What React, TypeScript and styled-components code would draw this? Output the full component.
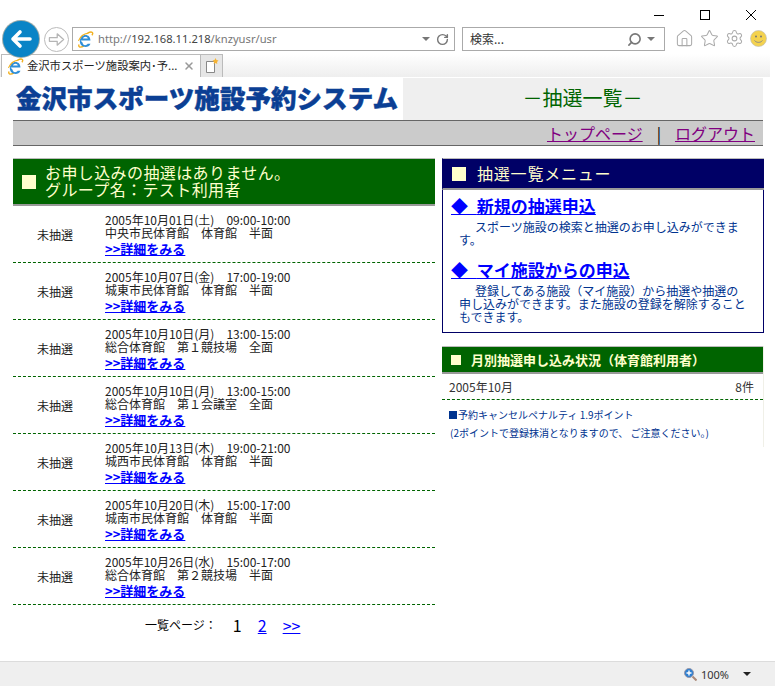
import React from "react";
import styled, { createGlobalStyle } from "styled-components";
import { Home, Star, Settings, RotateCw, Search, X } from "lucide-react";

const Global = createGlobalStyle`
  html, body { margin: 0; padding: 0; background: #fff; }
  * { box-sizing: border-box; }
`;
const JP = `"Noto Sans CJK JP", "Liberation Sans", sans-serif`;
const UI = `"Noto Sans", "Noto Sans CJK JP", sans-serif`;

const Window = styled.div`
  position: relative; width: 775px; height: 686px; overflow: hidden; display: flex; flex-direction: column;
  background: #fff; font-family: ${JP}; font-feature-settings: "hwid";
`;
const TitleBar = styled.div`
  height: 27px; flex: none; display: flex; justify-content: flex-end; align-items: flex-start; padding: 9px 18px 0 0; gap: 34px;
`;
const WinBtn = styled.svg`width: 12px; height: 12px; display: block; stroke: #000; stroke-width: 1; fill: none;`;
const NavRow = styled.div`
  height: 27px; flex: none; display: flex; align-items: flex-start; padding-left: 72px; gap: 7px;
`;
const BackButton = styled.div`
  position: absolute; left: 3px; top: 21px; width: 36px; height: 36px; border-radius: 50%; background: #0a84c6;
  box-shadow: 0 0 0 1px #9aa; display: flex; align-items: center; justify-content: center;
`;
const ForwardButton = styled.div`
  position: absolute; left: 44px; top: 27px; width: 25px; height: 25px; border-radius: 50%; border: 1px solid #bbb; background: #fff;
  display: flex; align-items: center; justify-content: center;
`;
const AddressBox = styled.div`
  width: 383px; height: 24px; border: 1px solid #aaa; display: flex; align-items: center; padding: 0 2px 0 4px;
  font: 11.2px/1 ${UI}; color: #777;
`;
const Url = styled.span`
  margin-left: 4px; flex: 1; white-space: nowrap;
  b { font-weight: 400; color: #444; }
`;
const Caret = styled.span`
  width: 0; height: 0; border-left: 4px solid transparent; border-right: 4px solid transparent; border-top: 4px solid #777; display: block;
`;
const SearchBox = styled(AddressBox)`
  width: 203px; padding: 0 9px 0 7px; color: #333; font: 12px/1 ${JP}; justify-content: space-between;
`;
const SearchIcons = styled.span`display: flex; align-items: center; gap: 5px;`;
const ToolIcons = styled.div`display: flex; align-items: center; gap: 6px; margin-left: 3px; padding-top: 2px; color: #aaa;`;
const Smiley = styled.svg`width: 17px; height: 17px; display: block;`;
const TabRow = styled.div`
  height: 23px; flex: none; display: flex; align-items: stretch; margin-right: 5px;
  background: linear-gradient(#fff, #eee);
`;
const Tab = styled.div`
  width: 200px; margin-left: 1px; background: #fff; border: 1px solid #bbb; border-bottom: 0; display: flex; align-items: center; padding: 0 5px 0 5px;
  font: 11.3px/1 ${JP}; color: #222; white-space: nowrap; gap: 4px; justify-content: space-between;
`;
const TabLabel = styled.span`display: flex; align-items: center; gap: 3px;`;
const NewTab = styled.div`
  width: 22px; background: #e6e6e6; border: 1px solid #bbb; border-left: 0; border-bottom: 0; display: flex; align-items: center; justify-content: center;
`;
const Page = styled.div`flex: 1; padding: 1px 12px 0 13px; min-height: 0;`;
const Header = styled.div`height: 42px; display: flex;`;
const LogoCell = styled.div`
  width: 390px; display: flex; align-items: center; padding: 0 0 5px 3px;
  font: 900 25.5px/1 ${JP}; color: #0b3f94; white-space: nowrap; -webkit-text-stroke: .5px #0b3f94; letter-spacing: .05px;
`;
const PageTitle = styled.div`
  flex: 1; background: #efefef; color: #006400; font: 400 20px/40px ${JP}; text-align: center; padding-right: 1px;
`;
const LinkBar = styled.div`
  height: 26px; background: #cbcbcb; border-top: 1px solid #666; border-bottom: 1px solid #666; display: flex; justify-content: flex-end; align-items: center; padding-right: 8px;
  font: 16px/1 ${JP}; color: #000; gap: 14px;
`;
const NavLink = styled.a`color: #800080; text-decoration: underline;`;
const Columns = styled.div`display: grid; grid-template-columns: 422px 322px; gap: 7px; margin-top: 12px;`;
const SectionHead = styled.div<{ $bg: string; $h: number; $b: number }>`
  height: ${p => p.$h}px; background: ${p => p.$bg}; border-top: 1px solid #bbb; border-bottom: ${p => p.$b}px solid #999;
  display: flex; align-items: center; color: #ffffcc;
`;
const Square = styled.span<{ $s: number; $ml: number; $mr: number }>`
  width: ${p => p.$s}px; height: ${p => p.$s}px; background: #ffffcc; flex: none; margin: 0 ${p => p.$mr}px 0 ${p => p.$ml}px;
`;
const HeadText = styled.div<{ $ls: number; $pb?: number }>`
  font: 16px/17px ${JP}; white-space: nowrap; letter-spacing: ${p => p.$ls}px; padding-bottom: ${p => p.$pb ?? 0}px;
`;
const Row = styled.div`
  height: 57px; border-bottom: 1px dashed #006400; display: flex; align-items: center; font: 12px/13px ${JP}; color: #222;
`;
const Status = styled.div`width: 92px; padding-left: 24px; padding-top: 1px; flex: none; white-space: nowrap;`;
const RowBody = styled.div`display: flex; flex-direction: column; white-space: pre;`;
const Detail = styled.a`
  font: 700 13px/15px ${JP}; color: #0000ff; text-decoration: underline; margin-top: 2px;
`;
const Pager = styled.div`
  display: flex; align-items: center; height: 43px; padding: 0 0 3px 132px; font: 12px/1 ${JP}; color: #000;
`;
const PageCurrent = styled.span`font-size: 16px; margin: 0 0 0 16px; width: 25px;`;
const PageLink = styled.a`font-size: 16px; color: #0000ff; text-decoration: underline; margin-right: 16px;`;
const MenuBox = styled.div`
  border: 1px solid #000066; border-top: 0; height: 143px;
`;
const MenuHead = styled(SectionHead)`border-left: 1px solid #000066;`;
const MenuBody = styled.div`padding: 6px 8px 0 8px;`;
const MenuLink = styled.a`
  display: block; font: 700 17px/20px ${JP}; color: #0000ff; text-decoration: underline; white-space: pre; width: max-content;
`;
const Diamond = styled.span`letter-spacing: 2.5px;`;
const MenuText = styled.p`
  margin: 4px 0 14px 8px; font: 12px/13px ${JP}; color: #00338f; text-indent: 16px; width: 290px;
`;
const MonthlyPanel = styled.div`margin-top: 13px; height: 101px; border-right: 1px solid #f0f0e8;`;
const MonthlyTitle = styled.div`font: 700 13px/1 ${JP}; white-space: nowrap;`;
const MonthRow = styled.div`
  height: 26px; display: flex; justify-content: space-between; align-items: center; padding: 1px 9px 0 7px;
  border-bottom: 1px dashed #006400; font: 12px/1 ${JP}; color: #333;
`;
const Note = styled.div<{ $mt: number; $ml: number }>`
  font: 10px/12px ${JP}; color: #00338f; margin: ${p => p.$mt}px 0 0 ${p => p.$ml}px; white-space: pre; display: flex; align-items: center;
`;
const NoteMark = styled.span`width: 8px; height: 8px; background: #00338f; margin-right: 1px; display: block;`;
const StatusBar = styled.div`
  height: 25px; flex: none; background: #efefef; border-top: 1px solid #dcdcdc; display: flex; align-items: center; justify-content: flex-end; padding-right: 24px;
  font: 11px/1 ${UI}; color: #333; gap: 4px;
`;
const StatusCaret = styled(Caret)`margin-left: 10px; border-top-color: #222;`;

const IeLogo = ({ size = 18 }: { size?: number }) => (
  <svg width={size} height={size} viewBox="0 0 24 24" style={{ display: "block", flex: "none" }}>
    <path d="M3 19C1 23 5 24 10 21M21 6c3-4 0-6-6-3" fill="none" stroke="#f2b01e" strokeWidth="2" />
    <path d="M5 13.5h14c0-5-3-8-7-8s-8 3.500-8 9 4 8 8 8c3 0 6-1.500 7-4.500h-4c-1 1.500-2 2-3.500 2-2 0-3.500-1.500-3.500-3.500zM8.500 10.500c.3-1.500 2-2.500 3.500-2.500s3 1 3.200 2.500z" fill="#2f8fd8" fillRule="evenodd" />
    <path d="M2 14C4 9 9 4 16 3" fill="none" stroke="#f2b01e" strokeWidth="1.500" />
  </svg>
);

const rows = [
  ["2005年10月01日(土)　09:00-10:00", "中央市民体育館　体育館　半面"],
  ["2005年10月07日(金)　17:00-19:00", "城東市民体育館　体育館　半面"],
  ["2005年10月10日(月)　13:00-15:00", "総合体育館　第１競技場　全面"],
  ["2005年10月10日(月)　13:00-15:00", "総合体育館　第１会議室　全面"],
  ["2005年10月13日(木)　19:00-21:00", "城西市民体育館　体育館　半面"],
  ["2005年10月20日(木)　15:00-17:00", "城南市民体育館　体育館　半面"],
  ["2005年10月26日(水)　15:00-17:00", "総合体育館　第２競技場　半面"],
];

export default function App() {
  return (
    <Window>
      <Global />
      <TitleBar>
        <WinBtn viewBox="0 0 12 12"><path d="M1 6.500h10" /></WinBtn>
        <WinBtn viewBox="0 0 12 12"><rect x="1.500" y="1.500" width="9" height="9" /></WinBtn>
        <WinBtn viewBox="0 0 12 12"><path d="M1 1l10 10M11 1L1 11" /></WinBtn>
      </TitleBar>
      <BackButton>
        <svg width="24" height="24" viewBox="0 0 24 24" fill="none" stroke="#fff" strokeWidth="3.600" strokeLinecap="round" strokeLinejoin="round">
          <path d="M21 12H4M11 5l-7 7 7 7" />
        </svg>
      </BackButton>
      <ForwardButton>
        <svg width="17" height="17" viewBox="0 0 24 24" fill="none" stroke="#b5b5b5" strokeWidth="1.800" strokeLinejoin="round">
          <path d="M2 9.500h11V4l9 8-9 8v-5.500H2z" />
        </svg>
      </ForwardButton>
      <NavRow>
        <AddressBox>
          <IeLogo size={17} />
          <Url>http://<b>192.168.11.218</b>/knzyusr/usr</Url>
          <Caret />
          <RotateCw size={13} color="#777" strokeWidth={2.600} style={{ margin: "0 3px 0 6px" }} />
        </AddressBox>
        <SearchBox>
          <span>検索...</span>
          <SearchIcons>
            <Search size={15} color="#777" strokeWidth={2.600} style={{ transform: "scaleX(-1)" }} />
            <Caret />
          </SearchIcons>
        </SearchBox>
        <ToolIcons>
          <Home size={19} strokeWidth={1.300} />
          <Star size={19} strokeWidth={1.300} />
          <Settings size={19} strokeWidth={1.300} />
          <Smiley viewBox="0 0 17 17">
            <circle cx="8.500" cy="8.500" r="8" fill="#f4d24e" stroke="#bbb" strokeWidth=".6" />
            <circle cx="6" cy="6.500" r="1" fill="#777" />
            <circle cx="11" cy="6.500" r="1" fill="#777" />
            <path d="M4.500 10.500c2 2.500 6 2.500 8 0" fill="none" stroke="#888" strokeWidth="1" />
          </Smiley>
        </ToolIcons>
      </NavRow>
      <TabRow>
        <Tab>
          <TabLabel><IeLogo size={17} />金沢市スポーツ施設案内･予...</TabLabel>
          <X size={12} color="#999" strokeWidth={3} />
        </Tab>
        <NewTab>
          <svg width="15" height="16" viewBox="0 0 15 16">
            <path d="M2.500 3.500h8v11h-8z" fill="#fff" stroke="#888" />
            <path d="M11.500 0l1 2 2 .5-1.500 1.500.3 2-1.800-1-1.800 1 .3-2L8.500 2.500l2-.5z" fill="#f5b335" />
          </svg>
        </NewTab>
      </TabRow>
      <Page>
        <Header>
          <LogoCell>金沢市スポーツ施設予約システム</LogoCell>
          <PageTitle>－抽選一覧－</PageTitle>
        </Header>
        <LinkBar>
          <NavLink>トップページ</NavLink>
          <span>|</span>
          <NavLink>ログアウト</NavLink>
        </LinkBar>
        <Columns>
          <div>
            <SectionHead $bg="#006400" $h={48} $b={2}>
              <Square $s={14} $ml={9} $mr={9} />
              <HeadText $ls={0.4} $pb={2}>お申し込みの抽選はありません。<br />グループ名：テスト利用者</HeadText>
            </SectionHead>
            {rows.map((r, i) => (
              <Row key={i}>
                <Status>未抽選</Status>
                <RowBody>
                  <span>{r[0]}</span>
                  <span>{r[1]}</span>
                  <Detail>&gt;&gt;詳細をみる</Detail>
                </RowBody>
              </Row>
            ))}
            <Pager>
              一覧ページ：
              <PageCurrent>1</PageCurrent>
              <PageLink>2</PageLink>
              <PageLink>&gt;&gt;</PageLink>
            </Pager>
          </div>
          <div>
            <MenuHead $bg="#000066" $h={32} $b={2}>
              <Square $s={14} $ml={9} $mr={11} />
              <HeadText $ls={0.8}>抽選一覧メニュー</HeadText>
            </MenuHead>
            <MenuBox>
              <MenuBody>
                <MenuLink><Diamond>◆ </Diamond>新規の抽選申込</MenuLink>
                <MenuText>スポーツ施設の検索と抽選のお申し込みができます。</MenuText>
                <MenuLink><Diamond>◆ </Diamond>マイ施設からの申込</MenuLink>
                <MenuText>登録してある施設（マイ施設）から抽選や抽選の申し込みができます。また施設の登録を解除することもできます。</MenuText>
              </MenuBody>
            </MenuBox>
            <MonthlyPanel>
              <SectionHead $bg="#006400" $h={28} $b={2}>
                <Square $s={10} $ml={9} $mr={10} />
                <MonthlyTitle>月別抽選申し込み状況（体育館利用者）</MonthlyTitle>
              </SectionHead>
              <MonthRow><span>2005年10月</span><span>8件</span></MonthRow>
              <Note $mt={9} $ml={7}><NoteMark />予約キャンセルペナルティ 1.9ポイント</Note>
              <Note $mt={6} $ml={8}>(2ポイントで登録抹消となりますので、 ご注意ください。)</Note>
            </MonthlyPanel>
          </div>
        </Columns>
      </Page>
      <StatusBar>
        <svg width="13" height="13" viewBox="0 0 13 13">
          <circle cx="5" cy="5" r="4.500" fill="#2f7fd0" stroke="#99a" />
          <path d="M5 2.500v5M2.500 5h5" stroke="#fff" strokeWidth="1.400" />
          <path d="M8.500 8.500l4 4" stroke="#a87" strokeWidth="2" />
        </svg>
        100%
        <StatusCaret />
      </StatusBar>
    </Window>
  );
}
